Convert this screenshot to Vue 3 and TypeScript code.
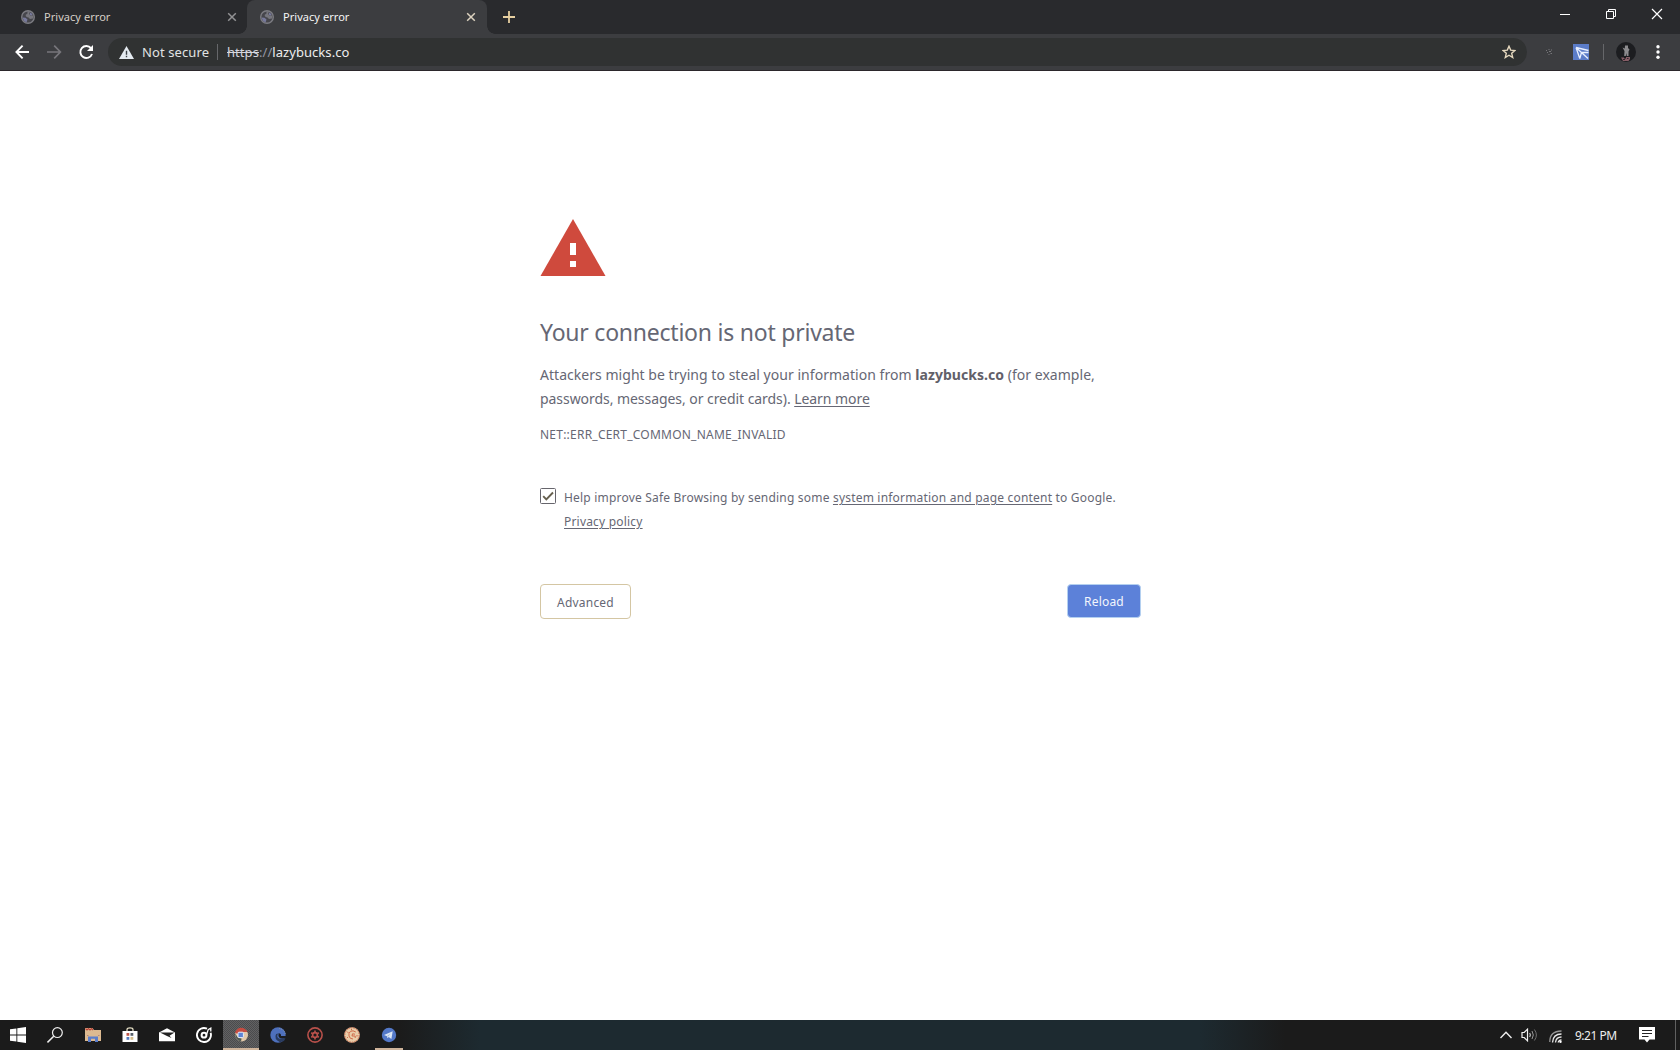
<template>
    <div class="screen">
        <header class="tab-strip">
            <div v-for="tab in tabs" :key="tab.id" class="tab" :class="{ active: tab.active }">
                <svg class="favicon" viewBox="0 0 14 14">
                    <circle cx="7" cy="7" r="6.3" fill="#46464c" stroke="#7c7c82" stroke-width="1.4" />
                    <path d="M6.5 1 9 1.5 8 4 9.5 5.5 12.5 5.5 12 8.5 9 9 7.5 7.5 5.5 7 4.5 5 6.5 3.5z" fill="#76767d" />
                    <path d="M1.5 7.5 4.5 7.8 6.5 9.5 5.5 12.5 3 11z" fill="#77799c" />
                    <path d="M9 2.5 11.5 4 11 5.5 8.8 5z" fill="#77799c" />
                </svg>
                <span class="tab-title">{{ tab.title }}</span>
                <svg class="tab-close" viewBox="0 0 10 10">
                    <path d="M1.2 1.2 8.8 8.8M8.8 1.2 1.2 8.8" />
                </svg>
            </div>
            <svg class="new-tab" viewBox="0 0 12 12">
                <path d="M6 0V12M0 6H12" stroke="#e6cfa0" stroke-width="1.8" />
            </svg>
            <svg class="window-controls" viewBox="0 0 104 12" fill="none" stroke="#fff" stroke-width="1">
                <path d="M0 6.5H10" />
                <path d="M46.5 3.5H53.5V10.5H46.5zM48.5 3.5V1.5H55.5V8.5H53.5" />
                <path d="M92 1 102 11M102 1 92 11" stroke-width="1.2" />
            </svg>
        </header>

        <nav class="toolbar">
            <svg class="nav-icons" viewBox="0 0 80 16" fill="none" stroke="#fff" stroke-width="1.9">
                <path d="M14 8H1.5M7.6 1.7 1.4 8 7.6 14.3" />
                <path d="M32 8H45M39.2 1.7 45.4 8 39.2 14.3" stroke="#77767b" stroke-width="1.7" />
                <path d="M76 4.2A6 6 0 1 0 77 10" />
                <path d="M78 1V7H72z" fill="#fff" stroke="none" />
            </svg>
            <div class="omnibox">
                <svg class="warn" viewBox="0 0 15 13">
                    <path d="M7.5 0 15 13H0z" fill="#e4ebf1" />
                    <path d="M7.5 4.8V8.7M7.5 9.8V11.3" stroke="#3b4147" stroke-width="1.4" />
                </svg>
                <span class="not-secure">Not secure</span>
                <i class="omni-divider"></i>
                <span class="url"><s>https</s><em>://</em>lazybucks.co</span>
                <svg class="star" viewBox="0 0 14 14">
                    <path d="M7 1.2 8.7 5.1 12.9 5.5 9.7 8.3 10.7 12.5 7 10.2 3.3 12.5 4.3 8.3 1.1 5.5 5.3 5.1z" fill="none" stroke="#e6d9bf" stroke-width="1.4" />
                </svg>
            </div>
            <svg class="ext-faint" viewBox="0 0 8 8" stroke="#77777a" stroke-width="1">
                <path d="M1 2.5H2M3.5 1.5H4.5M6 2H7M2 4.5H3M4 3.5H6M3.5 6.5H4.5M5.5 5.5H7" />
            </svg>
            <svg class="ext-blue" viewBox="0 0 16 16">
                <path d="M0 0H16V16H0z" fill="#5b7cc8" />
                <path d="M3 3.5 15.5 6.5M3 3.5 15 14.5M3 3.5 6.8 14.5M6.8 14.5 8.5 8.5H15.5" fill="none" stroke="#e7efff" stroke-width="1.3" />
            </svg>
            <i class="tool-divider"></i>
            <svg class="avatar" viewBox="0 0 20 20">
                <circle cx="10" cy="10" r="10" fill="#1c1d20" />
                <path d="M9 3.5H12V6L13.5 7.5 12.5 9.5V14H10.8L10.3 11 9.8 14H8.2L8.5 9 6.5 5.5 8.8 6.5z" fill="#8c8b8e" />
                <path d="M5 15.5H8V16.5H10V15H14V17L12.5 19H7z" fill="#865d66" />
                <path d="M7 17.5H9M11 16.5H12.5" stroke="#33272d" />
            </svg>
            <svg class="menu-dots" viewBox="0 0 4 14" fill="#fff">
                <circle cx="2" cy="1.8" r="1.7" />
                <circle cx="2" cy="7" r="1.7" />
                <circle cx="2" cy="12.2" r="1.7" />
            </svg>
        </nav>

        <main class="page">
            <div class="interstitial">
                <svg class="danger" viewBox="0 0 66 57">
                    <path d="M33 0 65.5 57H0.5z" fill="#cf4a3d" />
                    <path d="M30 24H36V36H30zM30 42H36V48H30z" fill="#fff" />
                </svg>
                <h1>Your connection is not private</h1>
                <p class="message">
                    <span class="line-one">Attackers might be trying to steal your information from <strong>lazybucks.co</strong> (for example,</span><br />
                    <span class="line-two">passwords, messages, or credit cards). <a>Learn more</a></span>
                </p>
                <p class="error-code">NET::ERR_CERT_COMMON_NAME_INVALID</p>
                <div class="opt-in">
                    <svg class="checkbox" viewBox="0 0 16 16" fill="none">
                        <rect x="0.5" y="0.5" width="15" height="15" rx="1" stroke="#66656c" />
                        <path d="M3.2 8.2 6.3 11.3 13 4.5" stroke="#66604f" stroke-width="1.9" />
                    </svg>
                    <p>
                        Help improve Safe Browsing by sending some <a>system information and page content</a> to Google.<br />
                        <a>Privacy policy</a>
                    </p>
                </div>
                <div class="buttons">
                    <button class="advanced">Advanced</button>
                    <button class="reload">Reload</button>
                </div>
            </div>
        </main>

        <footer class="taskbar">
            <div v-for="app in apps" :key="app" class="task" :class="app">
                <svg v-if="app === 'start'" viewBox="0 0 16 16" fill="#fff">
                    <path d="M0 2.3 6.4 1.4V7.4H0zM7.3 1.2 16 0V7.4H7.3zM0 8.4H6.4V14.5L0 13.7zM7.3 8.4H16V16L7.3 14.8z" />
                </svg>
                <svg v-else-if="app === 'search'" viewBox="0 0 16 16" fill="none" stroke="#f0f0f0">
                    <circle cx="10.4" cy="5.6" r="4.9" stroke-width="1.2" />
                    <path d="M6.7 9.2 0.5 15.4" stroke-width="1.5" />
                </svg>
                <svg v-else-if="app === 'files'" viewBox="0 0 16 16">
                    <path d="M0 1H7.5L9 3H16V14H0z" fill="#dcba91" />
                    <path d="M0.5 1.5 2 3 3.5 1.5 5 3 6.5 1.5 8 3" fill="none" stroke="#b84237" stroke-width="1.2" />
                    <path d="M3 15V9.5H13V15H10V11.7H6V15z" fill="#5b7ecb" />
                    <path d="M2 8.5H3.5M13 8.5H14.5" stroke="#b98675" />
                </svg>
                <svg v-else-if="app === 'store'" viewBox="0 0 16 16">
                    <path d="M5 4V2.5Q5 .8 8 .8T11 2.5V4" fill="none" stroke="#e8e2c8" stroke-width="1.2" />
                    <path d="M.5 4H15.5V15H.5z" fill="#fff" />
                    <path d="M4.5 6H7.3V8.8H4.5z" fill="#bd5548" />
                    <path d="M8.5 6H11.3V8.8H8.5z" fill="#59606a" />
                    <path d="M4.5 10H7.3V12.8H4.5z" fill="#547bc0" />
                    <path d="M8.5 10H11.3V12.8H8.5z" fill="#d8bf8c" />
                </svg>
                <svg v-else-if="app === 'mail'" viewBox="0 0 16 16">
                    <path d="M0 5.5 8 1.2 16 5.5V14.3H0z" fill="#fff" />
                    <path d="M1 5.5H15.5L10.5 8.8 12.5 11 8 9z" fill="#222" />
                </svg>
                <svg v-else-if="app === 'groove'" viewBox="0 0 16 16" fill="none" stroke="#fff">
                    <path d="M11 1.7A7 7 0 1 0 14.6 5.8" stroke-width="1.9" />
                    <circle cx="8" cy="8.2" r="2.4" stroke-width="2" />
                    <path d="M10.6 7.5 12.2 2.6 14.8 1.2V4.5" stroke-width="1.3" />
                </svg>
                <svg v-else-if="app === 'chrome'" viewBox="0 0 16 16">
                    <circle cx="8.6" cy="8" r="6.4" fill="#e2c9aa" />
                    <path d="M2 5.5Q4 .8 8 .8T14.5 5L10 5 6 5.5 4.5 7z" fill="#c64c41" />
                    <path d="M2.2 6.5 4.8 10.5 8.6 11.5 8 14.4Q2 13 2.2 6.5z" fill="#4f5851" />
                    <rect x="5" y="5.2" width="5.4" height="5.4" rx="1" fill="#5d84d5" stroke="#e6ecfa" />
                </svg>
                <svg v-else-if="app === 'edge'" viewBox="0 0 16 16">
                    <circle cx="8" cy="8" r="7.7" fill="#4e70bd" />
                    <path d="M8.4 6.4Q5.8 9.2 9 11.5 12 12.4 15.8 10.4L14 14 10 15.3Q3.5 12 6.1 7z" fill="#293b5f" />
                    <path d="M8.6 6.3Q11.3 6.3 11 9H16V11L12.6 11.5Q7.7 11.8 8.6 6.3z" fill="#1b1c1e" />
                    <path d="M9 1.2Q15 3 15.2 7" fill="none" stroke="#8a97a3" stroke-dasharray="1 1" />
                </svg>
                <svg v-else-if="app === 'gear'" viewBox="0 0 16 16" fill="none" stroke="#b9514b">
                    <circle cx="8" cy="8" r="7.1" stroke-width="1.6" />
                    <circle cx="8" cy="8" r="2.4" stroke-width="1.6" />
                    <path d="M8 3.6V5M8 11V12.4M4.2 5.8 5.4 6.5M10.6 9.5 11.8 10.2M4.2 10.2 5.4 9.5M10.6 6.5 11.8 5.8" stroke-width="1.6" />
                </svg>
                <svg v-else-if="app === 'coin'" viewBox="0 0 16 16">
                    <circle cx="8" cy="8" r="7.8" fill="#e9cda9" />
                    <circle cx="8" cy="8" r="7.2" fill="none" stroke="#c95b3f" stroke-width="1" stroke-dasharray="1.4 1.1" />
                    <path d="M11.8 5Q9 3 6.5 4.3 4.3 6 5 9T9 12M11 7.2 8.5 6.8 8 9H11.2V11M3 4.5 4.5 6M7.5 2V3.2M13 8V9.5M3 10 4 11" fill="none" stroke="#cf6a4a" stroke-width="1" />
                </svg>
                <svg v-else viewBox="0 0 16 16">
                    <circle cx="8" cy="8" r="7.2" fill="#5378c8" />
                    <path d="M3 8.1 11.7 4.3 10.4 12 7.7 10.1 6.5 11.3 6 9.2z" fill="#dce7f5" />
                    <path d="M6.1 9 9.5 6.5 7 9.7" fill="#9db4da" />
                </svg>
            </div>

            <div class="tray">
                <svg class="chevron" viewBox="0 0 12 8">
                    <path d="M.5 7 6 1.3 11.5 7" fill="none" stroke="#eee" stroke-width="1.4" />
                </svg>
                <svg class="speaker" viewBox="0 0 17 14" fill="none">
                    <path d="M1 4.5H3.2L6.5 1.2V12.8L3.2 9.5H1z" stroke="#f2f2f2" stroke-width="1.2" />
                    <path d="M8.7 5Q10 7 8.7 9" stroke="#ddd" stroke-width="1.1" />
                    <path d="M11 3Q13.6 7 11 11" stroke="#999" />
                    <path d="M13.4 1.5Q17.4 7 13.4 12.5" stroke="#707070" />
                </svg>
                <svg class="wifi" viewBox="0 0 13 13" fill="none" stroke-width="1.3">
                    <path d="M.8 12Q.8 1 12.5 1" stroke="#959595" />
                    <path d="M3.5 12.5Q4 4 12.5 4" stroke="#e6e6e6" />
                    <path d="M6.5 12.5Q7 7 12.5 7" stroke="#e6e6e6" />
                    <path d="M9.2 12.5Q9.5 10 12.5 9.8" stroke="#eee" />
                    <circle cx="11.5" cy="11.7" r="1.2" fill="#fff" />
                </svg>
                <time>9:21 PM</time>
                <svg class="notice" viewBox="0 0 16 16">
                    <path d="M0 0H16V12.5H10.5L8 15.5 5.5 12.5H0z" fill="#fff" />
                    <path d="M3 3.5H13M3 6.5H13M3 9.5H9.5" stroke="#252525" />
                </svg>
                <i class="show-desktop"></i>
            </div>
        </footer>
    </div>
</template>

<script setup lang="ts">
interface Tab {
    id: number;
    title: string;
    active: boolean;
}

const tabs: Tab[] = [
    { id: 1, title: "Privacy error", active: false },
    { id: 2, title: "Privacy error", active: true },
];

const apps: string[] = [
    "start",
    "search",
    "files",
    "store",
    "mail",
    "groove",
    "chrome",
    "edge",
    "gear",
    "coin",
    "telegram",
];
</script>

<style>
body {
    overflow: hidden;
    background: #fff;
}
</style>

<style scoped>
.screen {
    width: 1680px;
    height: 1050px;
    display: flex;
    flex-direction: column;
    font-family: "Noto Sans", sans-serif;
    color: #666774;
}

svg {
    display: block;
    flex: none;
}

.tab-strip {
    height: 34px;
    display: flex;
    background: #292a2d;
}

.tab {
    width: 240px;
    box-sizing: border-box;
    display: flex;
    align-items: center;
    padding: 0 11px 0 13px;
    color: #d6cfc8;
}

.tab:first-child {
    width: 247px;
    padding: 0 10px 0 21px;
}

.tab.active {
    position: relative;
    background: #3c3d40;
    border-radius: 8px 8px 0 0;
    color: #f5f5f5;
}

/* flared feet of the selected tab */
.tab.active::before,
.tab.active::after {
    content: "";
    position: absolute;
    bottom: 0;
    width: 8px;
    height: 8px;
}

.tab.active::before {
    left: -8px;
    background: radial-gradient(circle at 0 0, #292a2d 7.5px, #3c3d40 8px);
}

.tab.active::after {
    right: -8px;
    background: radial-gradient(circle at 100% 0, #292a2d 7.5px, #3c3d40 8px);
}

.favicon {
    width: 14px;
    height: 14px;
    margin-right: 9px;
}

.tab-title {
    flex: 1;
    padding-bottom: 2px;
    font-size: 11px;
    letter-spacing: 0.05px;
}

.tab-close {
    width: 10px;
    height: 10px;
    stroke: #929294;
    stroke-width: 1.5;
}

.active .tab-close {
    stroke: #ddd3c0;
}

.new-tab {
    width: 12px;
    height: 12px;
    margin: 11px 0 0 16px;
}

.window-controls {
    width: 104px;
    height: 12px;
    margin: 8px 16px 0 auto;
}

.toolbar {
    height: 37px;
    box-sizing: border-box;
    display: flex;
    align-items: center;
    background: #3c3d40;
    border-bottom: 1px solid #2b272b;
}

.nav-icons {
    width: 80px;
    height: 16px;
    margin-left: 15px;
}

.omnibox {
    width: 1419px;
    height: 28px;
    box-sizing: border-box;
    display: flex;
    align-items: center;
    margin-left: 13px;
    padding: 0 11px;
    border-radius: 14px;
    background: #303232;
    color: #eee;
    font-size: 13px;
}

.warn {
    width: 15px;
    height: 13px;
    margin-right: 8px;
}

.not-secure {
    width: 75px;
    color: #e1e3e3;
    letter-spacing: 0.1px;
}

.omni-divider,
.tool-divider {
    width: 1px;
    height: 16px;
    background: #66676a;
}

.url {
    margin-left: 9px;
    letter-spacing: 0.06px;
}

.url s {
    color: #d5d6de;
}

.url em {
    font-style: normal;
    color: #9495a2;
}

.star {
    width: 14px;
    height: 14px;
    margin-left: auto;
}

.ext-faint {
    width: 8px;
    height: 8px;
    margin-left: 18px;
}

.ext-blue {
    width: 16px;
    height: 16px;
    margin-left: 20px;
}

.tool-divider {
    margin-left: 14px;
}

.avatar {
    width: 20px;
    height: 20px;
    margin-left: 12px;
}

.menu-dots {
    width: 4px;
    height: 14px;
    margin-left: 20px;
}

.page {
    height: 949px;
    background: #fff;
}

.interstitial {
    width: 600px;
    margin: 0 auto;
    padding-top: 148px;
}

.danger {
    width: 66px;
    height: 57px;
}

h1 {
    margin: 41px 0 0;
    font-size: 23px;
    font-weight: 400;
    line-height: 30px;
    letter-spacing: -0.23px;
    white-space: nowrap;
}

.message {
    margin: 16px 0 0;
    font-size: 14px;
    line-height: 24px;
    white-space: nowrap;
}

.line-one {
    letter-spacing: 0.036px;
}

.line-two {
    letter-spacing: -0.055px;
}

a {
    text-decoration: underline;
    text-underline-offset: 2px;
    text-decoration-thickness: 1px;
}

.message strong {
    color: #626069;
}

.error-code {
    margin: 13px 0 0;
    font-size: 12px;
    line-height: 22px;
    letter-spacing: 0.23px;
}

.opt-in {
    display: flex;
    gap: 8px;
    margin-top: 40px;
    font-size: 12px;
    line-height: 24px;
    letter-spacing: 0.195px;
    white-space: nowrap;
}

.opt-in p {
    margin: 0;
}

.checkbox {
    width: 16px;
    height: 16px;
    margin-top: 2px;
}

.buttons {
    display: flex;
    justify-content: space-between;
    align-items: flex-start;
    margin: 50px -1px 0 0;
}

button {
    box-sizing: border-box;
    padding: 0;
    border-radius: 4px;
    font-family: inherit;
    font-size: 12px;
    letter-spacing: 0.2px;
}

.advanced {
    width: 91px;
    height: 35px;
    padding-top: 1px;
    border: 1px solid #d4c6a3;
    background: #fff;
    color: #666774;
}

.reload {
    width: 74px;
    height: 34px;
    border: 1px solid #b4d0f0;
    background: #5c81d9;
    color: #f3f6fc;
}

.taskbar {
    height: 30px;
    display: flex;
    background: linear-gradient(90deg, #1b1b1b 400px, #1d2a30 480px, #1d2a30 1200px, #1b1b1b 1285px);
}

.task {
    width: 37px;
    box-sizing: border-box;
    display: flex;
    justify-content: center;
    padding-top: 7px;
}

.task svg {
    width: 16px;
    height: 16px;
}

.task.start {
    width: 36px;
}

.task.files {
    width: 39px;
}

.task.store {
    width: 36px;
}

.task.groove {
    width: 38px;
}

.task.chrome {
    width: 36px;
    background: repeating-conic-gradient(#4b4b4d 0 25%, #626263 0 50%) 0 0 / 2px 2px;
    border-bottom: 2px solid #cfb49b;
}

.task.telegram {
    width: 28px;
    margin-left: 5px;
    border-bottom: 2px solid #cfb49b;
}

.tray {
    display: flex;
    align-items: center;
    margin-left: auto;
    color: #eee;
}

.chevron {
    width: 12px;
    height: 8px;
}

.speaker {
    width: 17px;
    height: 14px;
    margin-left: 9px;
}

.wifi {
    width: 13px;
    height: 13px;
    margin: 2px 0 0 11px;
}

time {
    width: 64px;
    margin-left: 13px;
    font-size: 12px;
    letter-spacing: -0.5px;
    white-space: nowrap;
}

.notice {
    width: 16px;
    height: 16px;
}

.show-desktop {
    width: 1px;
    height: 30px;
    margin: 0 4px 0 20px;
    background: #606060;
}
</style>
